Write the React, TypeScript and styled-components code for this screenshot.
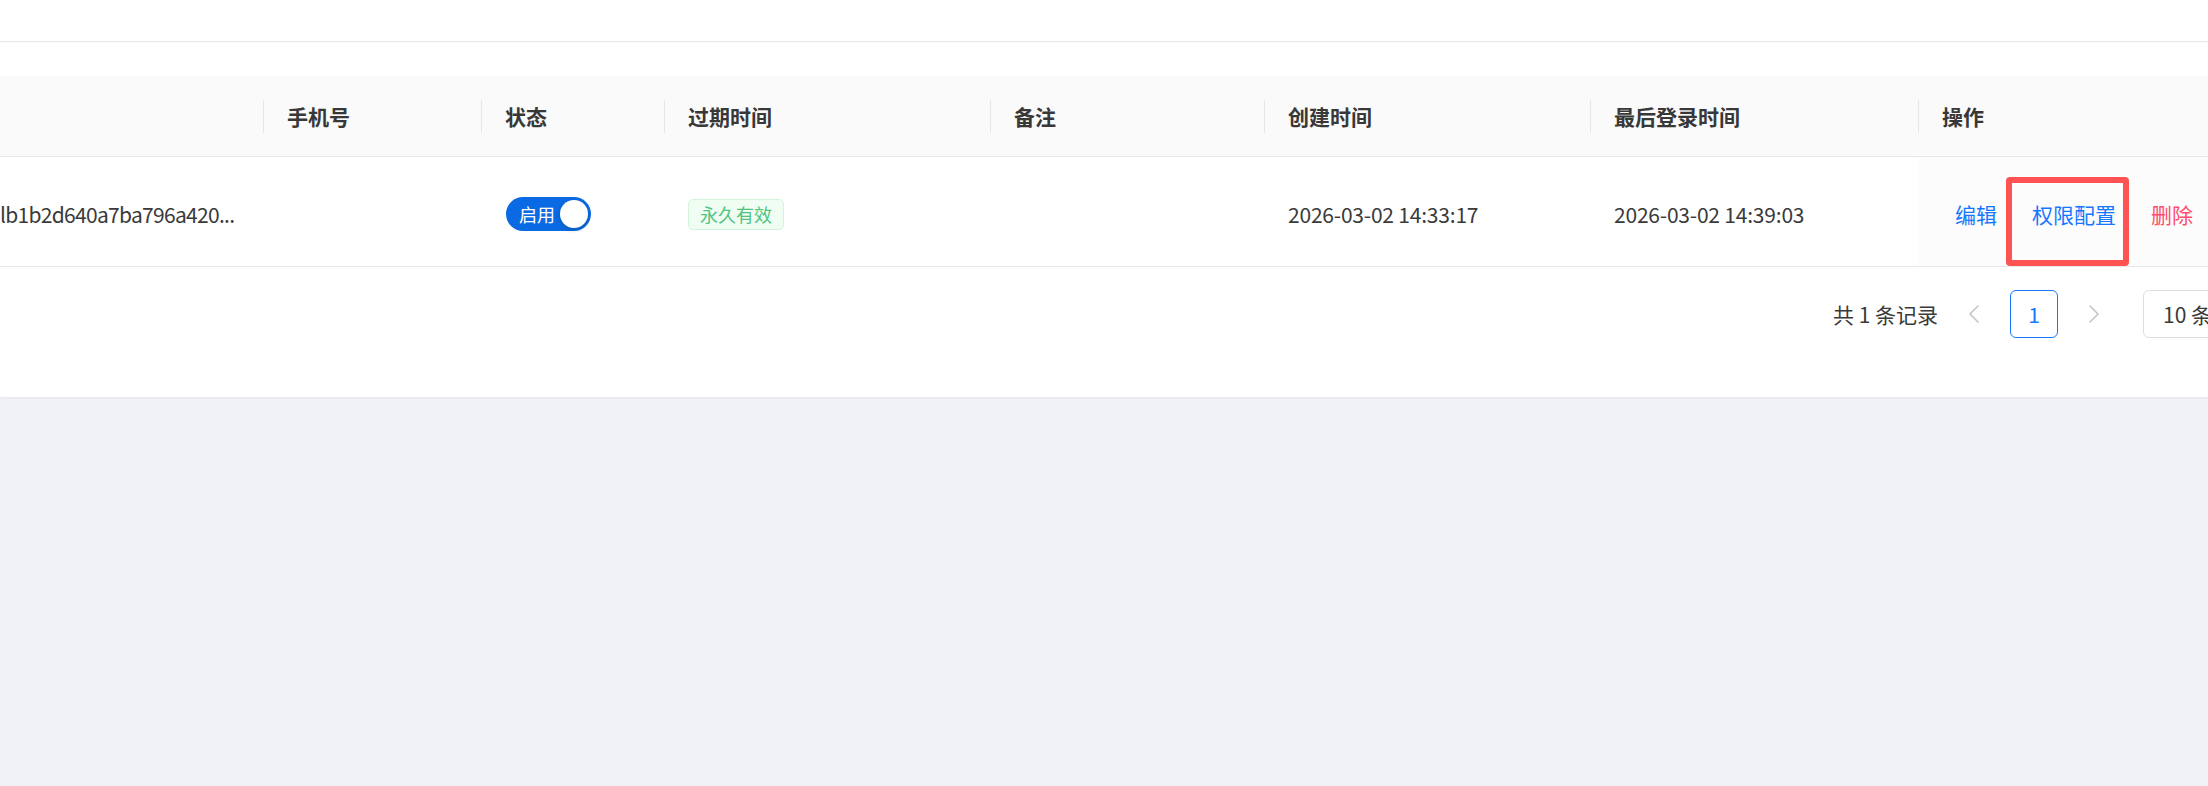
import styled, { createGlobalStyle } from "styled-components";

const GlobalStyle = createGlobalStyle`
    html, body {
        margin: 0;
        padding: 0;
        background: #f0f2f5;
        overflow: hidden;
        font-family: "Noto Sans CJK SC", "Noto Sans", sans-serif;
    }
`;

const Page = styled.div`
    width: 100%;
    height: 786px;
    overflow: hidden;
    background: #f0f2f5;
`;

const Card = styled.div`
    width: 2317px;
    background: #ffffff;
    box-shadow: 0 1px 3px rgba(0, 0, 0, 0.06);
`;

const Toolbar = styled.div`
    height: 41px;
    border-bottom: 1px solid #e6e6e6;
`;

const TableWrap = styled.div`
    padding-top: 34px;
`;

const columns = "263px 218px 183px 326px 274px 326px 328px 1fr";

const HeaderRow = styled.div`
    display: grid;
    grid-template-columns: ${columns};
    height: 80px;
    background: #fafafa;
    border-bottom: 1px solid #e8e8e8;
`;

const HeadCell = styled.div`
    position: relative;
    display: flex;
    align-items: center;
    padding-left: ${(p) => (p.$first ? 0 : 24)}px;
    font-size: 21px;
    font-weight: 700;
    color: #383838;

    &::before {
        content: "";
        display: ${(p) => (p.$first ? "none" : "block")};
        position: absolute;
        left: 0;
        top: 24px;
        height: 33px;
        width: 1px;
        background: #e6e6e6;
    }
`;

const BodyRow = styled.div`
    display: grid;
    grid-template-columns: ${columns};
    height: 109px;
    border-bottom: 1px solid #e8e8e8;
`;

const Cell = styled.div`
    display: flex;
    align-items: center;
    padding-top: 5px;
    padding-left: ${(p) => p.$pad ?? 24}px;
    font-size: 21px;
    letter-spacing: ${(p) => p.$tight ?? 0}px;
    color: #3a3a3a;
    white-space: nowrap;
    overflow: hidden;
`;

const OpsCell = styled(Cell)`
    position: relative;
    overflow: visible;
    gap: 35px;
    background: #fcfcfc;
    padding-left: 37px;
`;

const Switch = styled.div`
    display: flex;
    align-items: center;
    justify-content: space-between;
    box-sizing: border-box;
    width: 85px;
    height: 34px;
    padding: 0 3px 0 13px;
    border-radius: 17px;
    background: #0a6ae3;
    color: #ffffff;
    font-size: 18px;
`;

const Knob = styled.span`
    width: 28px;
    height: 28px;
    border-radius: 50%;
    background: #ffffff;
    box-shadow: 0 2px 4px rgba(0, 35, 11, 0.2);
`;

const Tag = styled.span`
    display: inline-flex;
    align-items: center;
    box-sizing: border-box;
    height: 31px;
    padding: 0 11px;
    border: 1px solid #d3f5dd;
    border-radius: 5px;
    background: #effdf3;
    color: #52c47e;
    font-size: 18px;
`;

const LinkBtn = styled.span`
    color: ${(p) => (p.$danger ? "#ff4d6d" : "#1677ff")};
    font-size: 21px;
    cursor: pointer;
`;

const Highlight = styled.div`
    position: absolute;
    left: 88px;
    top: 20px;
    width: 123px;
    height: 89px;
    box-sizing: border-box;
    border: 6px solid #ff5252;
    border-radius: 4px;
    pointer-events: none;
`;

const Pager = styled.div`
    display: flex;
    justify-content: flex-end;
    align-items: flex-start;
    gap: 12px;
    height: 130px;
    box-sizing: border-box;
    padding: 23px 24px 0 0;
`;

const Total = styled.span`
    height: 48px;
    line-height: 48px;
    font-size: 21px;
    color: #3a3a3a;
`;

const PageBtn = styled.div`
    display: flex;
    align-items: center;
    justify-content: center;
    box-sizing: border-box;
    width: 48px;
    height: 48px;
    border-radius: 6px;
    border: 1px solid ${(p) => (p.$active ? "#1677ff" : "transparent")};
    color: ${(p) => (p.$active ? "#1677ff" : "#c4c4c4")};
    font-size: 21px;
`;

const SizeSelect = styled.div`
    display: flex;
    align-items: center;
    box-sizing: border-box;
    width: 150px;
    height: 48px;
    margin-left: 13px;
    padding-left: 19px;
    border: 1px solid #dedede;
    border-radius: 6px;
    font-size: 21px;
    color: #3a3a3a;
`;

const Chevron = ({ dir }: { dir: "left" | "right" }) => (
    <svg width="12" height="20" viewBox="0 0 12 20" fill="none">
        <path
            d={dir === "left" ? "M10 2 L2 10 L10 18" : "M2 2 L10 10 L2 18"}
            stroke="currentColor"
            strokeWidth="1.6"
            strokeLinecap="round"
            strokeLinejoin="round"
        />
    </svg>
);

const headers = ["", "手机号", "状态", "过期时间", "备注", "创建时间", "最后登录时间", "操作"];

const App = () => {
    return (
        <Page>
            <GlobalStyle />
            <Card>
                <Toolbar />
                <TableWrap>
                    <HeaderRow>
                        {headers.map((h, i) => (
                            <HeadCell key={i} $first={i === 0}>
                                {h}
                            </HeadCell>
                        ))}
                    </HeaderRow>
                    <BodyRow>
                        <Cell $pad={0} $tight={-0.7}>
                            lb1b2d640a7ba796a420...
                        </Cell>
                        <Cell />
                        <Cell $pad={25}>
                            <Switch>
                                启用
                                <Knob />
                            </Switch>
                        </Cell>
                        <Cell>
                            <Tag>永久有效</Tag>
                        </Cell>
                        <Cell />
                        <Cell $tight={-0.2}>2026-03-02 14:33:17</Cell>
                        <Cell $tight={-0.2}>2026-03-02 14:39:03</Cell>
                        <OpsCell>
                            <LinkBtn>编辑</LinkBtn>
                            <LinkBtn>权限配置</LinkBtn>
                            <LinkBtn $danger>删除</LinkBtn>
                            <Highlight />
                        </OpsCell>
                    </BodyRow>
                </TableWrap>
                <Pager>
                    <Total>共 1 条记录</Total>
                    <PageBtn>
                        <Chevron dir="left" />
                    </PageBtn>
                    <PageBtn $active>1</PageBtn>
                    <PageBtn>
                        <Chevron dir="right" />
                    </PageBtn>
                    <SizeSelect>10 条/页</SizeSelect>
                </Pager>
            </Card>
        </Page>
    );
};

export default App;
